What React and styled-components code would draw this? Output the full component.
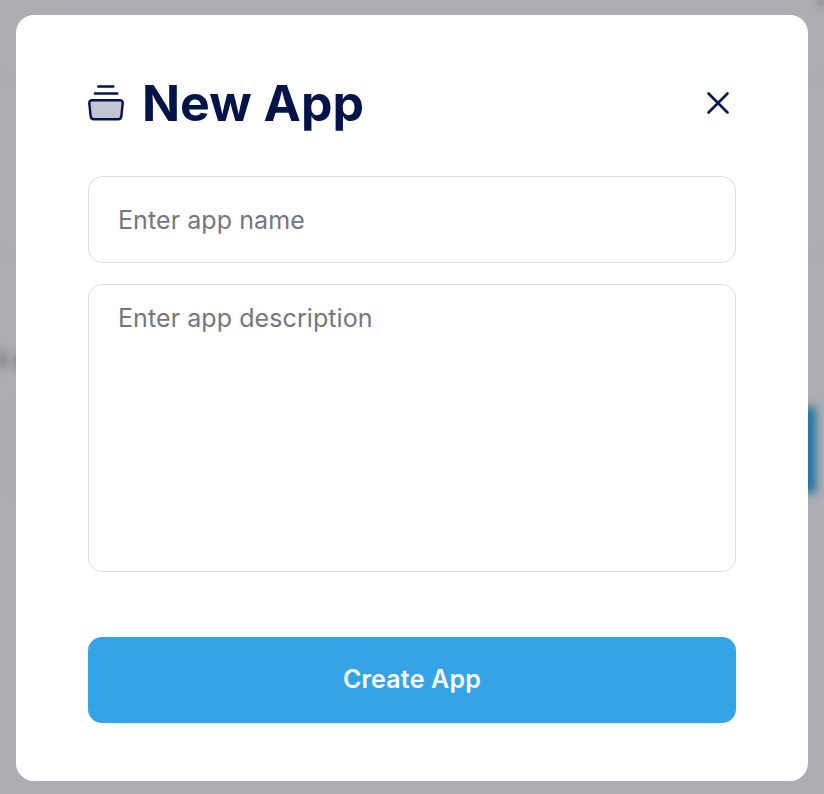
import React from "react";
import styled, { createGlobalStyle } from "styled-components";

const GlobalStyle = createGlobalStyle`
  *, *::before, *::after { box-sizing: border-box; }
  html, body { margin: 0; padding: 0; overflow: hidden; }
  body, input, textarea, button { font-family: Inter, "Liberation Sans", sans-serif; }
`;

const Screen = styled.div`
  display: grid;
  width: 824px;
  height: 794px;
  overflow: hidden;
  background: #adaeb3;
`;

const Backdrop = styled.div`
  grid-area: 1 / 1;
  display: flex;
  flex-direction: column;
  min-width: 0;
  height: 794px;
  overflow: hidden;
  filter: blur(4px);
`;

const TopBar = styled.div`
  display: flex;
  justify-content: flex-end;
  flex: none;
  height: 80px;
  border-bottom: 2px solid #a7a8ad;
`;

const Avatar = styled.div`
  width: 36px;
  height: 36px;
  margin: -28px -26px 0 0;
  border-radius: 50%;
  background: #4c4d52;
`;

const Banner = styled.div`
  flex: none;
  height: 175px;
  border-bottom: 2px solid #a8aaae;
`;

const Count = styled.div`
  flex: none;
  height: 150px;
  padding-top: 92px;
  margin-left: -9px;
  font-size: 26px;
  line-height: 26px;
  font-weight: 700;
  color: #66676d;
`;

const Toolbar = styled.div`
  display: flex;
  justify-content: flex-end;
  flex: none;
  height: 88px;
  margin: 1px 8px 0;
  border: 1px solid #a4a5aa;
  border-right: 0;
`;

const ToolbarAction = styled.div`
  width: 60px;
  background: #2273a4;
`;

const Dialog = styled.form`
  grid-area: 1 / 1;
  z-index: 1;
  display: flex;
  flex-direction: column;
  width: 792px;
  height: 766px;
  margin: 15px 16px 0;
  padding: 56px 72px 58px;
  border-radius: 18px;
  background: #fff;
`;

const Header = styled.header`
  display: flex;
  align-items: center;
  height: 64px;
  margin-bottom: 41px;
  color: #001449;
`;

const AppIcon = styled.svg`
  flex: none;
  width: 36px;
  height: 36px;
`;

const Title = styled.h1`
  flex: 1;
  margin: 0 0 0 18px;
  font-size: 50px;
  line-height: 64px;
  font-weight: 700;
`;

const CloseButton = styled.button`
  display: flex;
  align-items: center;
  justify-content: center;
  width: 36px;
  height: 36px;
  padding: 0;
  border: 0;
  background: none;
  color: inherit;
`;

const Field = styled.input`
  flex: none;
  width: 100%;
  height: ${({ $height }) => $height}px;
  margin: 0 0 21px;
  padding: 0 29px;
  border: 1px solid #dcdde2;
  border-radius: 14px;
  outline: none;
  resize: none;
  background: #fff;
  color: #001449;
  font-size: 25px;
  line-height: 36px;
  letter-spacing: 0.08px;

  &::placeholder { color: #747780; opacity: 1; }
`;

const DescriptionField = styled(Field)`
  margin-bottom: 65px;
  padding-top: 15px;
`;

const SubmitButton = styled.button`
  flex: none;
  height: 86px;
  padding: 0 0 2px;
  border: 0;
  border-radius: 14px;
  background: #34a4e7;
  color: #fff;
  font-size: 25px;
  font-weight: 600;
  letter-spacing: 0.2px;
`;

export default function App() {
  return (
    <Screen>
      <GlobalStyle />
      <Backdrop aria-hidden="true">
        <TopBar><Avatar /></TopBar>
        <Banner />
        <Count>3 c</Count>
        <Toolbar><ToolbarAction /></Toolbar>
      </Backdrop>
      <Dialog role="dialog" aria-label="New App">
        <Header>
          <AppIcon viewBox="0 0 36 36" fill="none" stroke="currentColor" strokeWidth="2.4" strokeLinecap="round">
            <path d="M10.3 1.5h15M6.8 8.5h22.5" />
            <path d="M4.2 15.2h27.6q3.2 0 2.9 3.2l-1.3 12.4q-.3 3.5-3.5 3.5H6.1q-3.2 0-3.5-3.5L1.3 18.4q-.3-3.2 2.9-3.2Z" fill="#c3c5d2" />
          </AppIcon>
          <Title>New App</Title>
          <CloseButton type="button" aria-label="Close">
            <svg width="24" height="24" viewBox="0 0 24 24" fill="none" stroke="currentColor" strokeWidth="2.6" strokeLinecap="round">
              <path d="m2.5 2.5 19 19m0-19-19 19" />
            </svg>
          </CloseButton>
        </Header>
        <Field $height={87} placeholder="Enter app name" />
        <DescriptionField as="textarea" $height={288} placeholder="Enter app description" />
        <SubmitButton type="button">Create App</SubmitButton>
      </Dialog>
    </Screen>
  );
}
